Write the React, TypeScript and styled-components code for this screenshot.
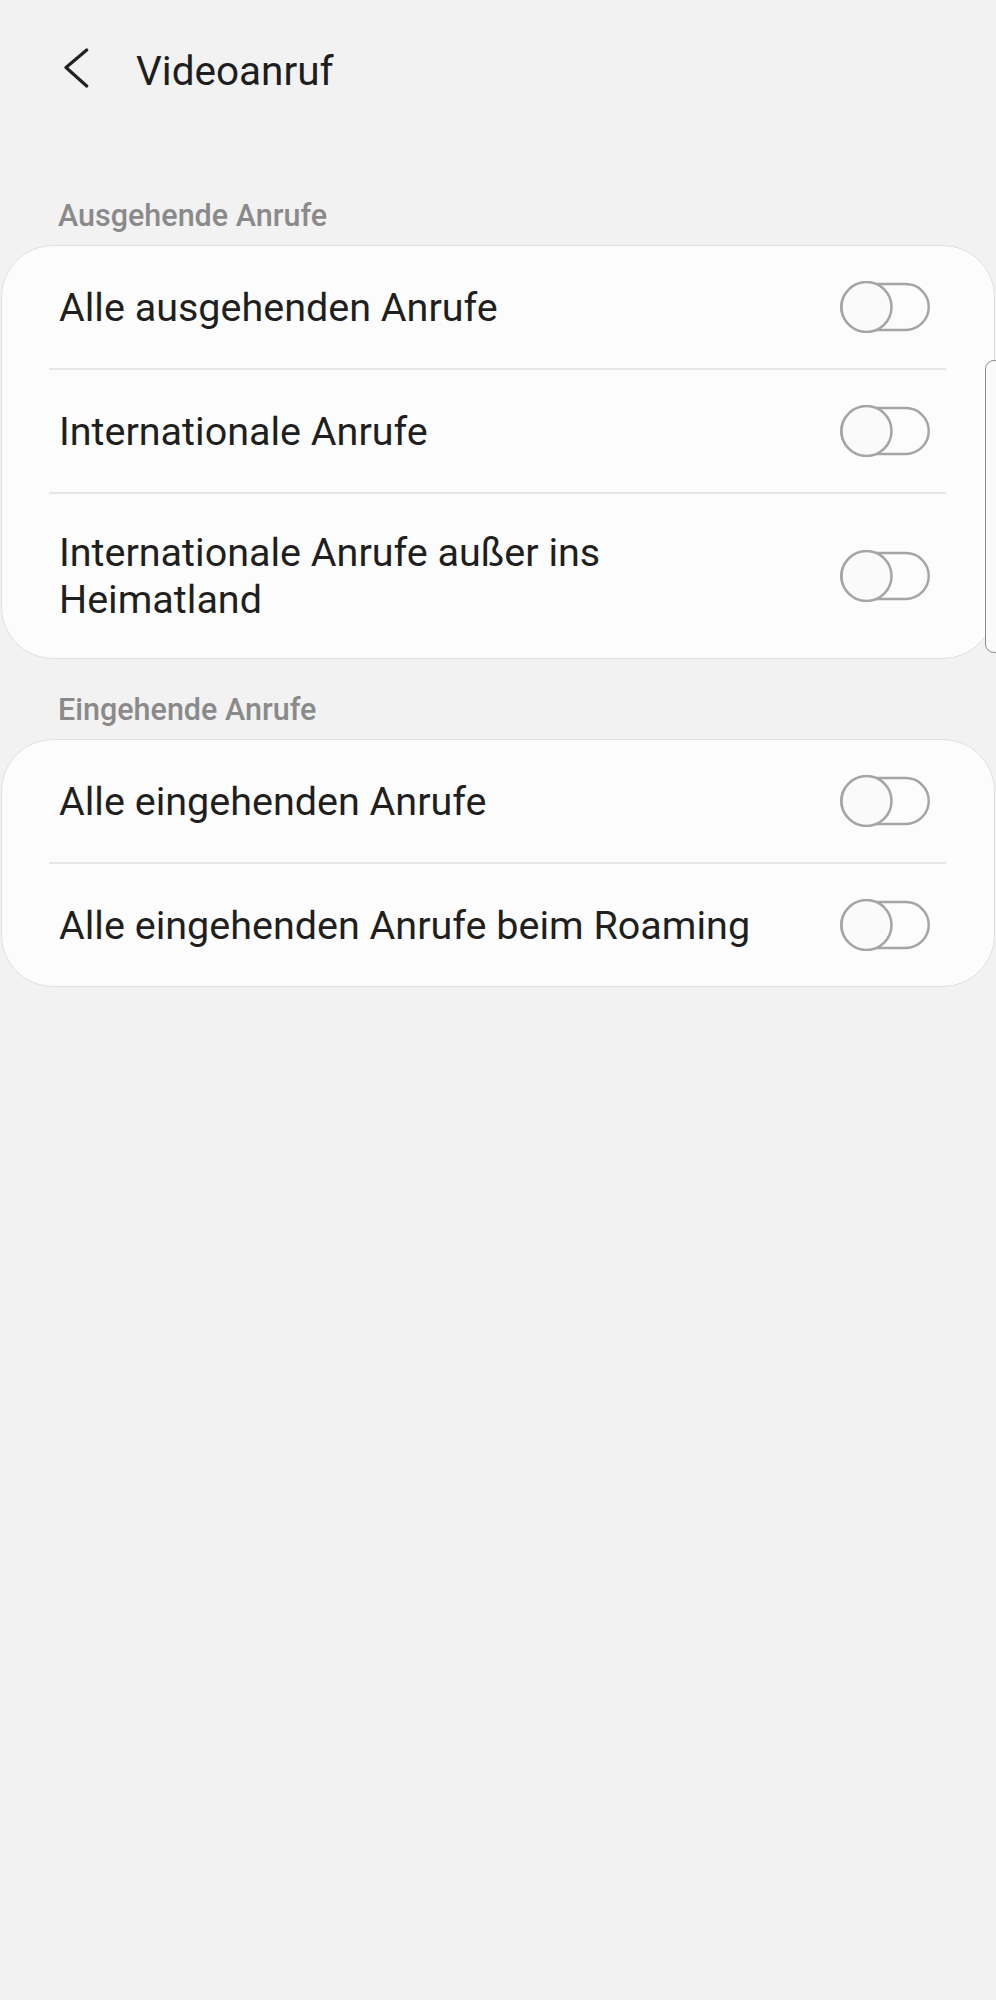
import React, { useState } from 'react';
import styled, { createGlobalStyle } from 'styled-components';

const GlobalStyle = createGlobalStyle`
   body {
      margin: 0;
      background: #f2f2f2;
      font-family: Roboto, "Liberation Sans", sans-serif;
      -webkit-font-smoothing: antialiased;
   }
`;

const Page = styled.div`
   position: relative;
   min-height: 2000px;
   background: #f2f2f2;
   overflow: hidden;
`;

const Toolbar = styled.header`
   height: 142px;
   display: flex;
   align-items: center;
   padding-left: 63px;
   gap: 47px;
`;

const BackIcon = styled.svg`
   width: 26px;
   height: 40px;
   margin-top: -6px;
   flex-shrink: 0;
`;

const Title = styled.h1`
   margin: 0;
   font-size: 40.5px;
   font-weight: 400;
   line-height: 48px;
   color: #1e1e1e;
`;

const SectionLabel = styled.h2<{ $first?: boolean }>`
   margin: ${(p) => (p.$first ? '56px' : '33px')} 0 11px;
   padding-left: 58px;
   font-size: 30.5px;
   font-weight: 500;
   line-height: 36px;
   color: #8a8a8a;
`;

const Card = styled.section`
   margin: 0 1px;
   background: #fcfcfc;
   border: 1px solid #e0e0e0;
   border-radius: 52px;
   overflow: hidden;
`;

const Row = styled.div`
   box-sizing: border-box;
   display: flex;
   align-items: center;
   min-height: 120px;
   padding: 35px 64px 35px 57px;
`;

const Label = styled.span`
   flex: 1;
   margin-right: 40px;
   font-size: 39.5px;
   line-height: 47px;
   color: #1f1f1f;
`;

const Divider = styled.div`
   height: 2px;
   margin: 0 48px 0 47px;
   background: #e6e6e6;
`;

const SwitchButton = styled.button`
   padding: 0;
   border: 0;
   background: none;
   width: 90px;
   height: 52px;
   flex-shrink: 0;
   cursor: pointer;

   svg {
      display: block;
   }
`;

// samsung edge panel handle, sits over the cards
const EdgeHandle = styled.div`
   position: absolute;
   left: 985px;
   top: 360px;
   width: 20px;
   height: 293px;
   box-sizing: border-box;
   border: 1.5px solid #8c8c8c;
   border-radius: 9px;
   background: #fafafa;
`;

function Switch() {
   const [on, setOn] = useState(false);
   const stroke = on ? '#3e91ff' : '#a5a5a5';

   return (
      <SwitchButton onClick={() => setOn(!on)} aria-pressed={on}>
         <svg width="90" height="52" viewBox="0 0 90 52">
            <rect x="1.25" y="3.1" width="87.5" height="45.8" rx="22.9" fill={on ? '#3e91ff' : 'none'} stroke={stroke} strokeWidth="2.5" />
            <circle cx={on ? 63.5 : 26.5} cy="26" r="25" fill="#fafafa" stroke={stroke} strokeWidth="2.5" />
         </svg>
      </SwitchButton>
   );
}

const sections = [
   {
      title: 'Ausgehende Anrufe',
      items: ['Alle ausgehenden Anrufe', 'Internationale Anrufe', 'Internationale Anrufe außer ins Heimatland'],
   },
   {
      title: 'Eingehende Anrufe',
      items: ['Alle eingehenden Anrufe', 'Alle eingehenden Anrufe beim Roaming'],
   },
];

export default function App() {
   return (
      <Page>
         <GlobalStyle />
         <Toolbar>
            <BackIcon viewBox="0 0 26 40" fill="none">
               <polyline points="23.7,2 3,19.5 23.7,38" stroke="#222" strokeWidth="3.2" strokeLinecap="round" strokeLinejoin="round" />
            </BackIcon>
            <Title>Videoanruf</Title>
         </Toolbar>

         {sections.map((section, i) => (
            <React.Fragment key={section.title}>
               <SectionLabel $first={i === 0}>{section.title}</SectionLabel>
               <Card>
                  {section.items.map((item, j) => (
                     <React.Fragment key={item}>
                        {j > 0 && <Divider />}
                        <Row>
                           <Label>{item}</Label>
                           <Switch />
                        </Row>
                     </React.Fragment>
                  ))}
               </Card>
            </React.Fragment>
         ))}

         <EdgeHandle />
      </Page>
   );
}
